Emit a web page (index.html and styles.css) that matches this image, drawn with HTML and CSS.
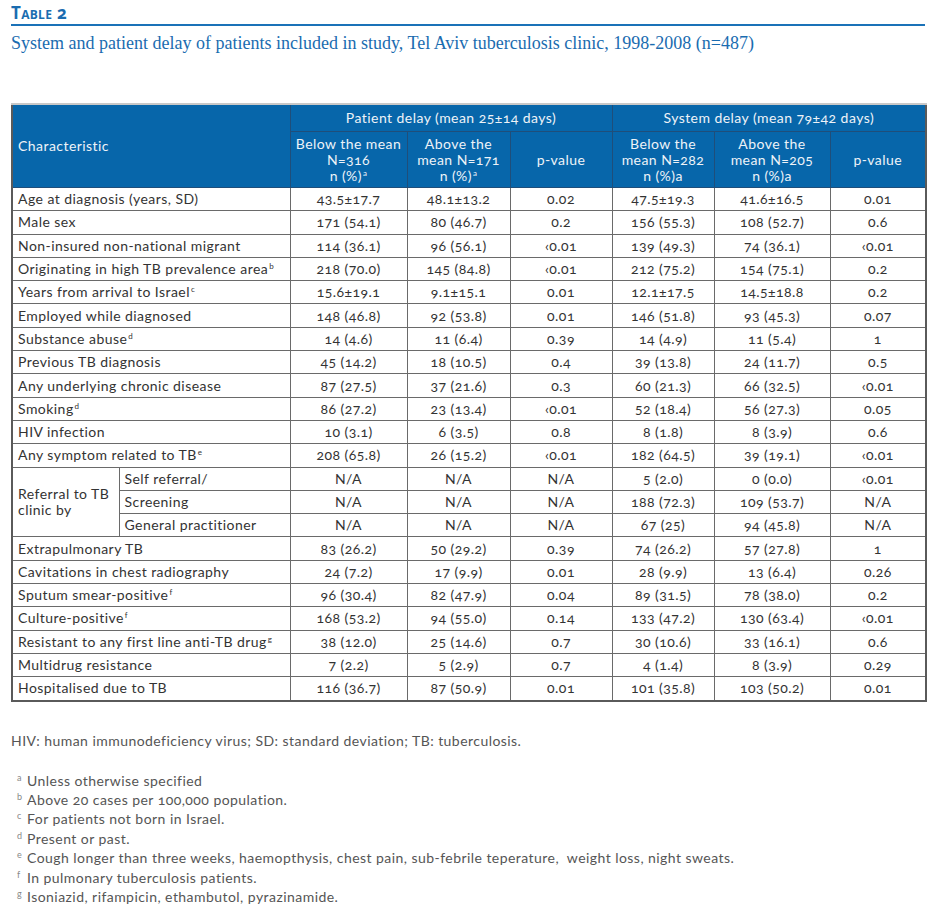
FILE: index.html
```html
<!DOCTYPE html>
<html lang="en">
<head>
<meta charset="utf-8">
<title>Table 2</title>
<link rel="stylesheet" href="styles.css">
</head>
<body>
<div class="page">
  <div class="label">Table 2</div>
  <div class="caption">System and patient delay of patients included in study, Tel Aviv tuberculosis clinic, 1998-2008 (n=487)</div>

  <table class="data">
    <colgroup>
      <col class="c-a"><col class="c-b"><col class="c-n"><col class="c-n2"><col class="c-p"><col class="c-n3"><col class="c-n4"><col class="c-p2">
    </colgroup>
    <thead>
      <tr class="h1">
        <th class="char" colspan="2" rowspan="2">Characteristic</th>
        <th colspan="3">Patient delay (mean 25±14 days)</th>
        <th colspan="3">System delay (mean 79±42 days)</th>
      </tr>
      <tr class="h2">
        <th>Below the mean<br>N=316<br>n (%)<sup>a</sup></th>
        <th>Above the<br>mean N=171<br>n (%)<sup>a</sup></th>
        <th>p-value</th>
        <th>Below the<br>mean N=282<br>n (%)a</th>
        <th>Above the<br>mean N=205<br>n (%)a</th>
        <th>p-value</th>
      </tr>
    </thead>
    <tbody>
      <tr><td class="lab" colspan="2">Age at diagnosis (years, SD)</td><td>43.5±17.7</td><td>48.1±13.2</td><td>0.02</td><td>47.5±19.3</td><td>41.6±16.5</td><td>0.01</td></tr>
      <tr><td class="lab" colspan="2">Male sex</td><td>171 (54.1)</td><td>80 (46.7)</td><td>0.2</td><td>156 (55.3)</td><td>108 (52.7)</td><td>0.6</td></tr>
      <tr><td class="lab" colspan="2">Non-insured non-national migrant</td><td>114 (36.1)</td><td>96 (56.1)</td><td>‹0.01</td><td>139 (49.3)</td><td>74 (36.1)</td><td>‹0.01</td></tr>
      <tr><td class="lab" colspan="2">Originating in high TB prevalence area<sup>b</sup></td><td>218 (70.0)</td><td>145 (84.8)</td><td>‹0.01</td><td>212 (75.2)</td><td>154 (75.1)</td><td>0.2</td></tr>
      <tr><td class="lab" colspan="2">Years from arrival to Israel<sup>c</sup></td><td>15.6±19.1</td><td>9.1±15.1</td><td>0.01</td><td>12.1±17.5</td><td>14.5±18.8</td><td>0.2</td></tr>
      <tr><td class="lab" colspan="2">Employed while diagnosed</td><td>148 (46.8)</td><td>92 (53.8)</td><td>0.01</td><td>146 (51.8)</td><td>93 (45.3)</td><td>0.07</td></tr>
      <tr><td class="lab" colspan="2">Substance abuse<sup>d</sup></td><td>14 (4.6)</td><td>11 (6.4)</td><td>0.39</td><td>14 (4.9)</td><td>11 (5.4)</td><td>1</td></tr>
      <tr><td class="lab" colspan="2">Previous TB diagnosis</td><td>45 (14.2)</td><td>18 (10.5)</td><td>0.4</td><td>39 (13.8)</td><td>24 (11.7)</td><td>0.5</td></tr>
      <tr><td class="lab" colspan="2">Any underlying chronic disease</td><td>87 (27.5)</td><td>37 (21.6)</td><td>0.3</td><td>60 (21.3)</td><td>66 (32.5)</td><td>‹0.01</td></tr>
      <tr><td class="lab" colspan="2">Smoking<sup>d</sup></td><td>86 (27.2)</td><td>23 (13.4)</td><td>‹0.01</td><td>52 (18.4)</td><td>56 (27.3)</td><td>0.05</td></tr>
      <tr><td class="lab" colspan="2">HIV infection</td><td>10 (3.1)</td><td>6 (3.5)</td><td>0.8</td><td>8 (1.8)</td><td>8 (3.9)</td><td>0.6</td></tr>
      <tr><td class="lab" colspan="2">Any symptom related to TB<sup>e</sup></td><td>208 (65.8)</td><td>26 (15.2)</td><td>‹0.01</td><td>182 (64.5)</td><td>39 (19.1)</td><td>‹0.01</td></tr>
      <tr><td class="lab grp" rowspan="3">Referral to TB<br>clinic by</td><td class="lab">Self referral/</td><td>N/A</td><td>N/A</td><td>N/A</td><td>5 (2.0)</td><td>0 (0.0)</td><td>‹0.01</td></tr>
      <tr><td class="lab">Screening</td><td>N/A</td><td>N/A</td><td>N/A</td><td>188 (72.3)</td><td>109 (53.7)</td><td>N/A</td></tr>
      <tr><td class="lab">General practitioner</td><td>N/A</td><td>N/A</td><td>N/A</td><td>67 (25)</td><td>94 (45.8)</td><td>N/A</td></tr>
      <tr><td class="lab" colspan="2">Extrapulmonary TB</td><td>83 (26.2)</td><td>50 (29.2)</td><td>0.39</td><td>74 (26.2)</td><td>57 (27.8)</td><td>1</td></tr>
      <tr><td class="lab" colspan="2">Cavitations in chest radiography</td><td>24 (7.2)</td><td>17 (9.9)</td><td>0.01</td><td>28 (9.9)</td><td>13 (6.4)</td><td>0.26</td></tr>
      <tr><td class="lab" colspan="2">Sputum smear-positive<sup>f</sup></td><td>96 (30.4)</td><td>82 (47.9)</td><td>0.04</td><td>89 (31.5)</td><td>78 (38.0)</td><td>0.2</td></tr>
      <tr><td class="lab" colspan="2">Culture-positive<sup>f</sup></td><td>168 (53.2)</td><td>94 (55.0)</td><td>0.14</td><td>133 (47.2)</td><td>130 (63.4)</td><td>‹0.01</td></tr>
      <tr><td class="lab" colspan="2">Resistant to any first line anti-TB drug<sup>g</sup></td><td>38 (12.0)</td><td>25 (14.6)</td><td>0.7</td><td>30 (10.6)</td><td>33 (16.1)</td><td>0.6</td></tr>
      <tr><td class="lab" colspan="2">Multidrug resistance</td><td>7 (2.2)</td><td>5 (2.9)</td><td>0.7</td><td>4 (1.4)</td><td>8 (3.9)</td><td>0.29</td></tr>
      <tr><td class="lab" colspan="2">Hospitalised due to TB</td><td>116 (36.7)</td><td>87 (50.9)</td><td>0.01</td><td>101 (35.8)</td><td>103 (50.2)</td><td>0.01</td></tr>
    </tbody>
  </table>

  <p class="abbr">HIV: human immunodeficiency virus; SD: standard deviation; TB: tuberculosis.</p>

  <ul class="notes">
    <li><span class="mark">a</span>Unless otherwise specified</li>
    <li><span class="mark">b</span>Above 20 cases per 100,000 population.</li>
    <li><span class="mark">c</span>For patients not born in Israel.</li>
    <li><span class="mark">d</span>Present or past.</li>
    <li><span class="mark">e</span>Cough longer than three weeks, haemopthysis, chest pain, sub-febrile teperature,&nbsp; weight loss, night sweats.</li>
    <li><span class="mark">f</span>In pulmonary tuberculosis patients.</li>
    <li><span class="mark">g</span>Isoniazid, rifampicin, ethambutol, pyrazinamide.</li>
  </ul>
</div>
</body>
</html>
```
FILE: styles.css
```css
html, body {
  margin: 0;
  padding: 0;
  background: #ffffff;
}

.page {
  width: 914px;
  padding: 0 0 0 11px;
  font-family: Lato, "Open Sans", sans-serif;
  font-feature-settings: "onum" 1;
  color: #333333;
}

.label {
  font-family: "Open Sans", sans-serif;
  font-weight: 700;
  font-variant: small-caps;
  font-size: 17px;
  line-height: 20px;
  letter-spacing: 0.3px;
  color: #1a6cb0;
  padding-top: 3px;
  padding-bottom: 1px;
  border-bottom: 2px solid #1a72b8;
}

.caption {
  font-family: "Liberation Serif", "DejaVu Serif", serif;
  font-size: 18px;
  line-height: 22px;
  color: #1a6cb0;
  margin-top: 6px;
}

.data {
  margin-top: 49px;
  width: 914px;
  border-collapse: collapse;
  table-layout: fixed;
  border: 2px solid #5a5a5a;
  font-size: 14px;
  letter-spacing: 0.45px;
}

.c-a { width: 107px; }
.c-b { width: 171px; }
.c-n { width: 117px; }
.c-n2 { width: 103px; }
.c-p { width: 102px; }
.c-n3 { width: 102px; }
.c-n4 { width: 116px; }
.c-p2 { width: 96px; }

.data th {
  background: #0766aa;
  color: #eef3f8;
  font-weight: 400;
  text-align: center;
  border: 1px solid #1f4e7a;
  padding: 0 3px;
  line-height: 16px;
}

.data .h1 th {
  height: 26px;
  border-top: 2px solid #c8c8c8;
}

.data .h2 th {
  height: 54px;
  padding-top: 1px;
}

.data th.char {
  text-align: left;
  padding-left: 5px;
}

.data sup {
  font-size: 8px;
  line-height: 0;
  vertical-align: 5px;
  margin-left: 1px;
}

.data td {
  border: 1px solid #6a6a6a;
  text-align: center;
  height: 22.3px;
  padding: 0 3px;
  line-height: 16px;
}

.data td.lab {
  text-align: left;
  padding-left: 5px;
}

.data td.grp {
  vertical-align: middle;
}

.abbr {
  margin: 29px 0 0 0;
  font-size: 14px;
  letter-spacing: 0.45px;
  color: #555555;
  line-height: 19px;
}

.notes {
  list-style: none;
  margin: 21px 0 0 0;
  padding: 0;
  font-size: 14px;
  letter-spacing: 0.45px;
  color: #555555;
}

.notes li {
  line-height: 19.4px;
  display: flex;
}

.notes .mark {
  width: 16px;
  padding-left: 6px;
  box-sizing: border-box;
  font-size: 9px;
  line-height: 14px;
  color: #888888;
}
```
